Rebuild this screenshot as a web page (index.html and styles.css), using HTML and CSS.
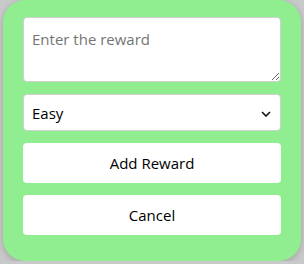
FILE: index.html
```html
<!DOCTYPE html>
<html lang="en">
<head>
    <meta charset="UTF-8">
    <meta name="viewport" content="width=device-width, initial-scale=1.0">
    <title>Add Reward</title>
    <link rel="stylesheet" href="styles.css">
</head>
<body>
    <div class="modal">
        <textarea class="reward-input" placeholder="Enter the reward"></textarea>
        <div class="select-wrap">
            <select class="difficulty">
                <option>Easy</option>
                <option>Medium</option>
                <option>Hard</option>
            </select>
            <svg class="chevron" width="10" height="6" viewBox="0 0 10 6">
                <path d="M1 1 L5 5 L9 1" fill="none" stroke="#111" stroke-width="1.6"/>
            </svg>
        </div>
        <button class="btn">Add Reward</button>
        <button class="btn">Cancel</button>
    </div>
</body>
</html>
```

FILE: styles.css
```css
body {
    margin: 0;
    background: #c9c9c9;
    font-family: "Open Sans", "Noto Sans", sans-serif;
}
.modal {
    margin: 0 3px;
    height: 261px;
    box-sizing: border-box;
    padding: 17px 20px 26px;
    background: #90ee90;
    border-radius: 22px;
    box-shadow: 0 2px 6px rgba(0, 0, 0, 0.2);
    display: flex;
    flex-direction: column;
    gap: 12px;
}
.reward-input {
    height: 65px;
    flex-shrink: 0;
    box-sizing: border-box;
    padding: 11px 8px 8px;
    border: 1px solid #d0d0d0;
    border-radius: 4px;
    font-family: inherit;
    font-size: 15px;
    resize: both;
    outline: none;
}
.reward-input::placeholder {
    color: #757575;
}
.select-wrap {
    position: relative;
}
.difficulty {
    width: 100%;
    height: 37px;
    padding: 0 8px;
    border: 1px solid #d0d0d0;
    border-radius: 4px;
    background: #fff;
    font-family: inherit;
    font-size: 15px;
    color: #000;
    appearance: none;
    -webkit-appearance: none;
    outline: none;
}
.chevron {
    position: absolute;
    right: 10px;
    top: 17px;
    pointer-events: none;
}
.btn {
    height: 40px;
    flex-shrink: 0;
    border: none;
    border-radius: 4px;
    background: #fff;
    font-family: inherit;
    font-size: 15px;
    color: #000;
    cursor: pointer;
}
```
